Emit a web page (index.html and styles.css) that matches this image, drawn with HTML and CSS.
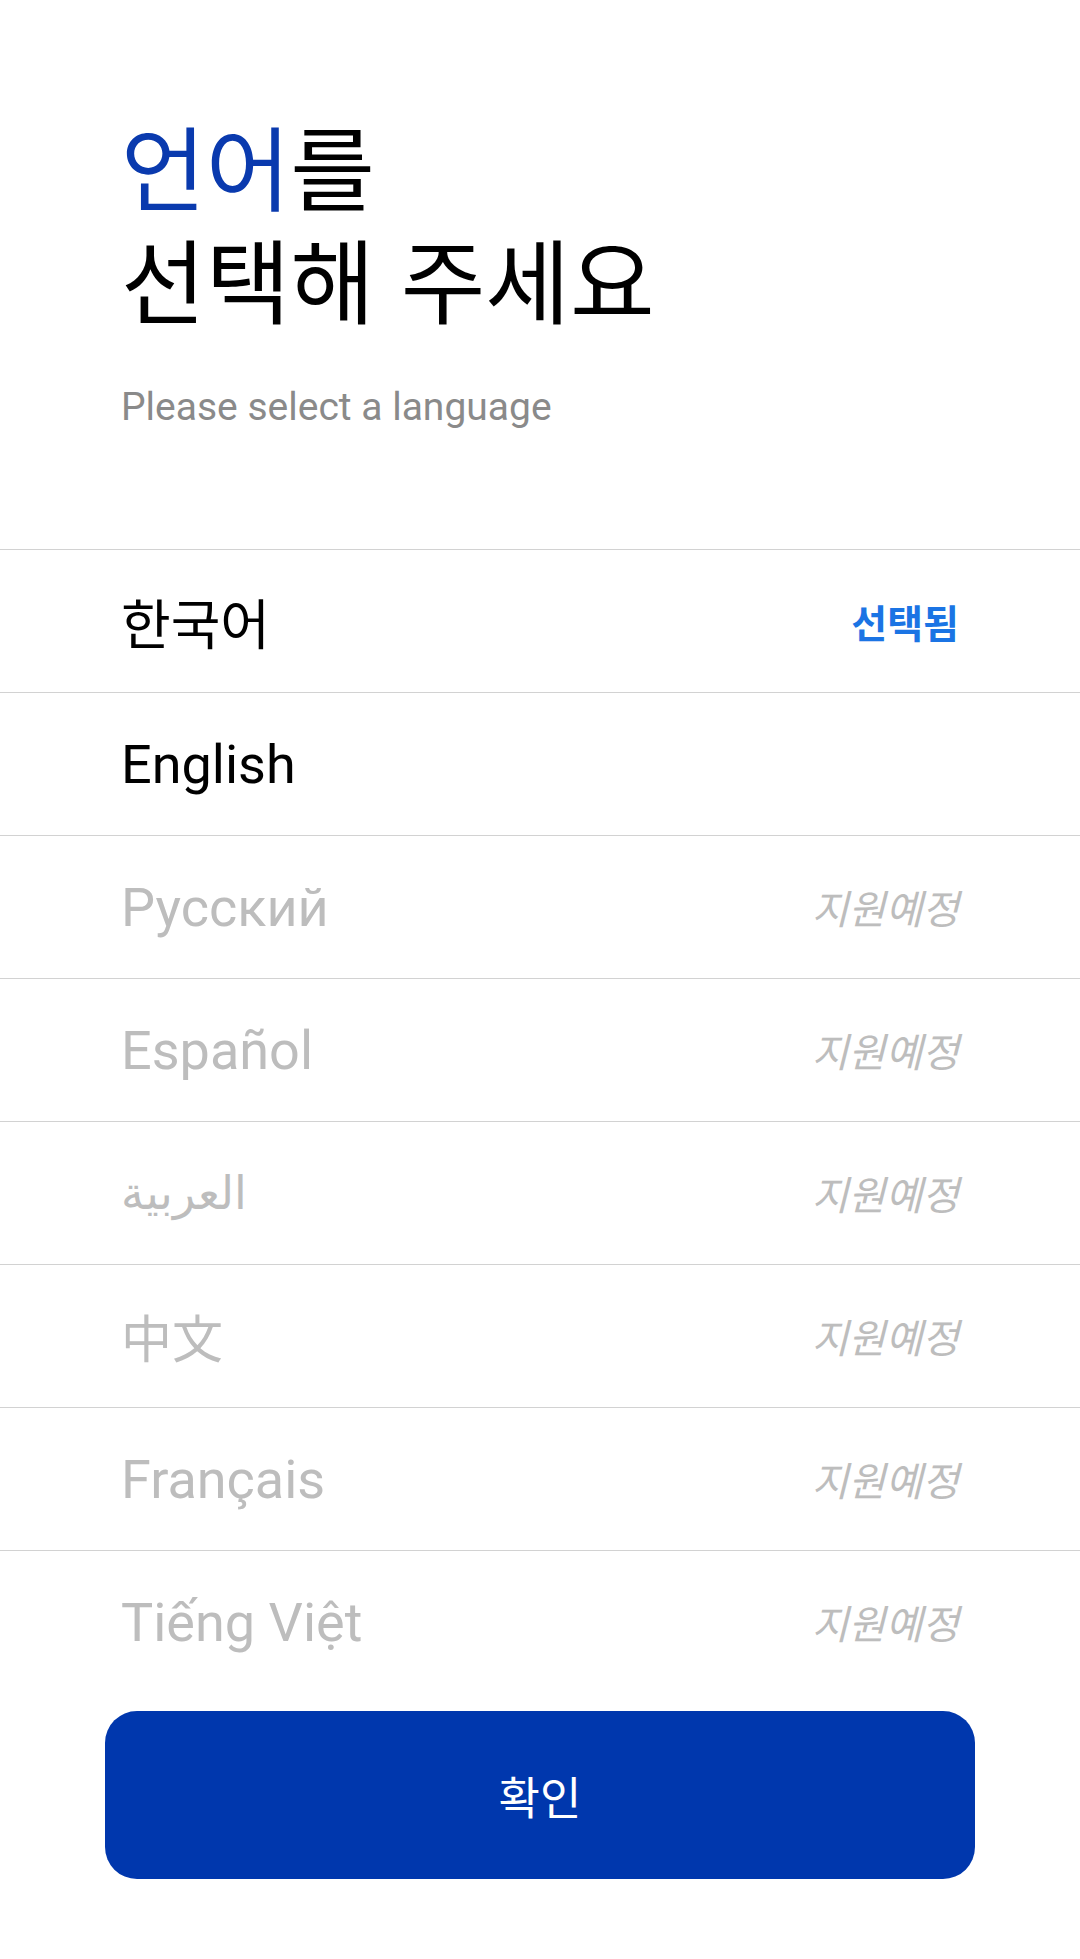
FILE: index.html
```html
<!DOCTYPE html>
<html lang="ko">
<head>
<meta charset="utf-8">
<title>언어 선택</title>
<link rel="stylesheet" href="styles.css">
</head>
<body>
<main class="screen">
  <header class="header">
    <h1 class="title"><span class="accent">언어</span>를<br>선택해 주세요</h1>
    <p class="subtitle">Please select a language</p>
  </header>
  <ul class="lang-list">
    <li class="lang-row"><span class="lang-name">한국어</span><span class="status selected">선택됨</span></li>
    <li class="lang-row"><span class="lang-name">English</span></li>
    <li class="lang-row disabled"><span class="lang-name">Русский</span><span class="status soon">지원예정</span></li>
    <li class="lang-row disabled"><span class="lang-name">Español</span><span class="status soon">지원예정</span></li>
    <li class="lang-row disabled"><span class="lang-name arabic">العربية</span><span class="status soon">지원예정</span></li>
    <li class="lang-row disabled"><span class="lang-name cjk">中文</span><span class="status soon">지원예정</span></li>
    <li class="lang-row disabled"><span class="lang-name">Français</span><span class="status soon">지원예정</span></li>
    <li class="lang-row disabled last"><span class="lang-name">Tiếng Việt</span><span class="status soon">지원예정</span></li>
  </ul>
  <div class="footer">
    <button class="confirm" type="button">확인</button>
  </div>
</main>
</body>
</html>
```

FILE: styles.css
```css
html, body {
  margin: 0;
  padding: 0;
  background: #ffffff;
}
body {
  font-family: Roboto, "Noto Sans CJK KR", sans-serif;
  color: #000000;
  width: 1080px;
  height: 1959px;
  overflow: hidden;
}
.screen {
  display: flex;
  flex-direction: column;
}
.header {
  padding: 107px 121px 0;
}
.title {
  margin: 0;
  font-family: "Noto Sans CJK KR", sans-serif;
  font-weight: 400;
  font-size: 92px;
  line-height: 113px;
  color: #000000;
}
.accent {
  color: #0a3aae;
}
.subtitle {
  margin: 50px 0 0;
  font-size: 39px;
  line-height: 48px;
  color: #8a8a8a;
}
.lang-list {
  list-style: none;
  margin: 118px 0 0;
  padding: 0;
}
.lang-row {
  display: flex;
  align-items: center;
  justify-content: space-between;
  height: 142px;
  padding: 0 121px;
  border-top: 1px solid #d2d2d2;
}
.lang-name {
  font-size: 54px;
  color: #000000;
}
.lang-name.cjk {
  font-family: "Noto Sans CJK SC", sans-serif;
  font-size: 51px;
}
.lang-name.arabic {
  font-size: 46px;
}
.disabled .lang-name {
  color: #bdbdbd;
}
.status {
  font-family: "Noto Sans CJK KR", sans-serif;
  font-size: 40px;
}
.selected {
  color: #1b74e4;
  font-weight: 700;
  font-size: 39px;
}
.soon {
  color: #bdbdbd;
  font-style: italic;
}
.footer {
  padding: 18px 105px 0;
}
.confirm {
  width: 100%;
  height: 168px;
  border: 0;
  border-radius: 32px;
  background: #0037ad;
  color: #ffffff;
  font-family: "Noto Sans CJK KR", sans-serif;
  font-size: 45px;
  font-weight: 400;
  padding: 0;
}
```
